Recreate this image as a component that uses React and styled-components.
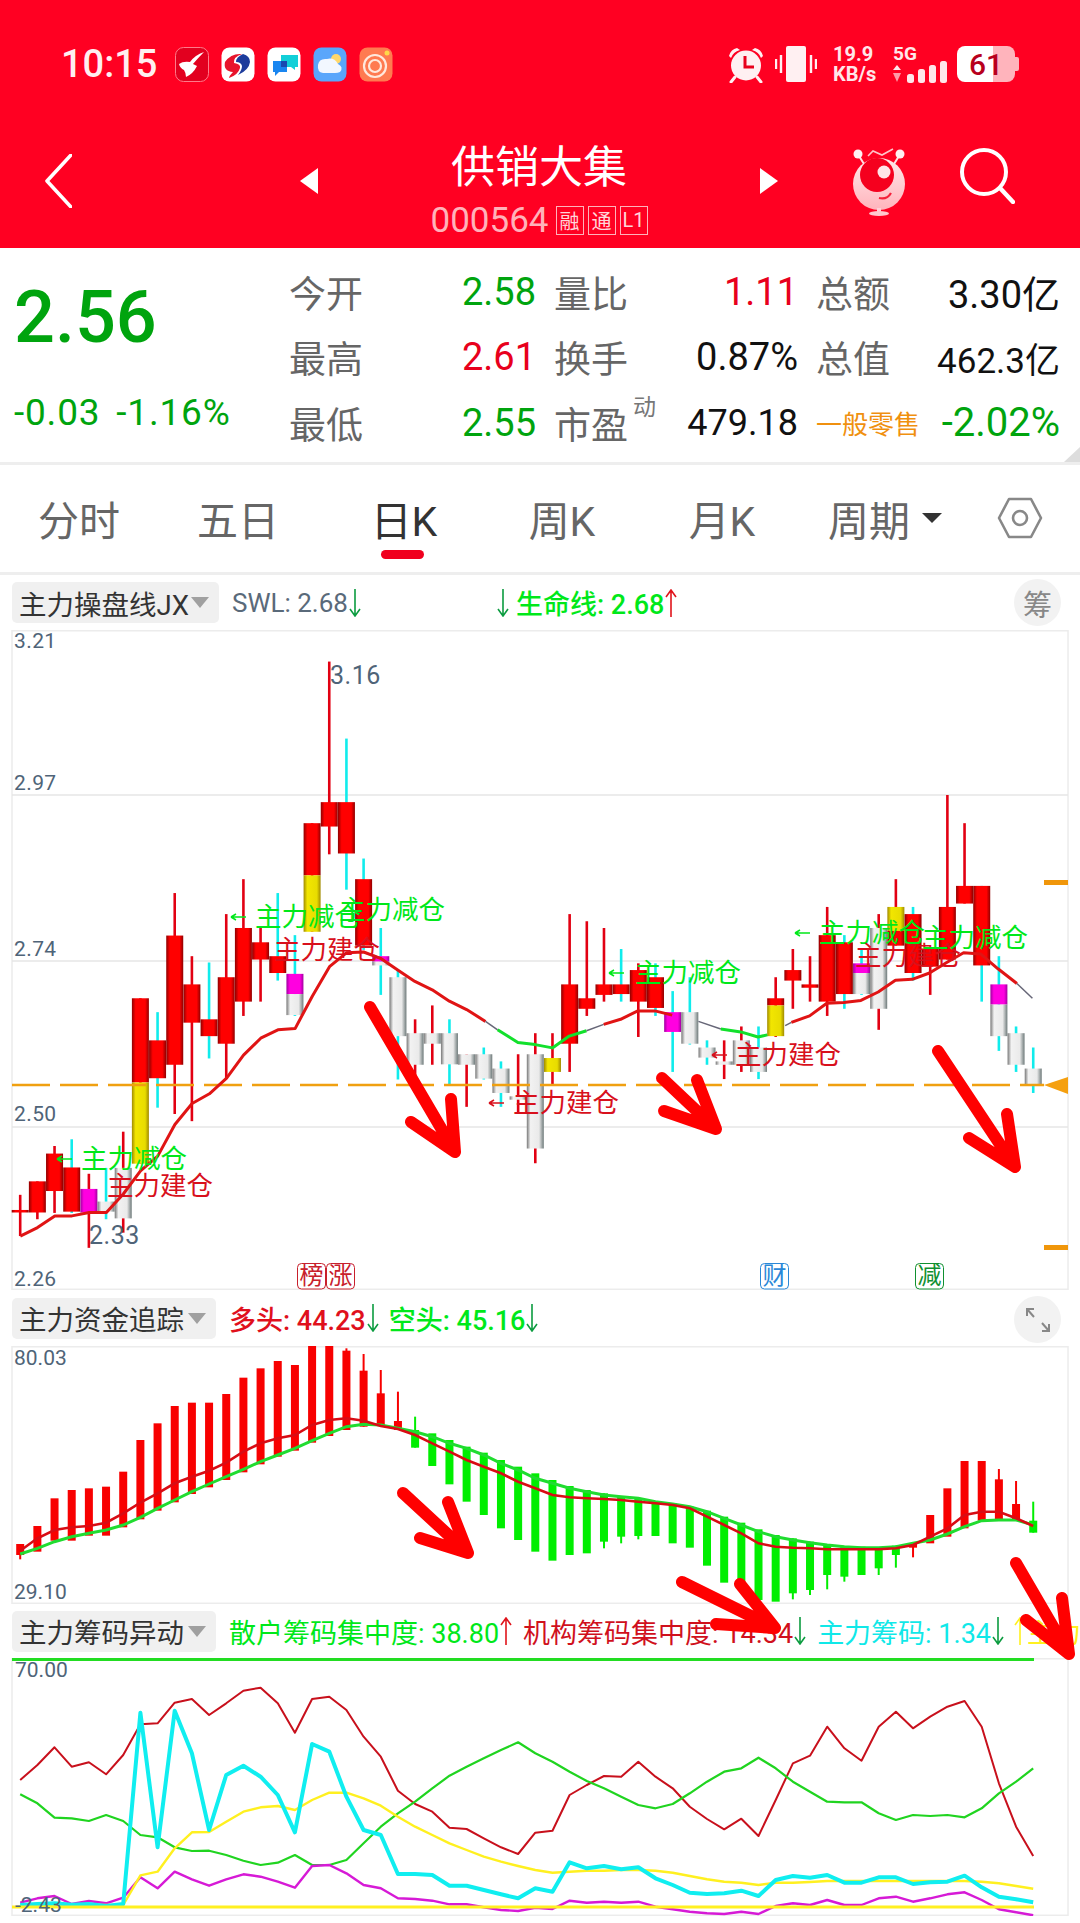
import React from 'react';
import styled, { createGlobalStyle } from 'styled-components';

const FONT = `Roboto, "Noto Sans CJK SC", sans-serif`;
const GREEN = '#00a40e';
const RED = '#e8001c';
const NEON = '#00e81a';

const GlobalStyle = createGlobalStyle`
  html, body { margin: 0; padding: 0; background: #fff; }
  body { font-family: ${FONT}; }
`;

const Page = styled.div`
  position: relative;
  width: 1080px;
  height: 1923px;
  overflow: hidden;
  background: #fff;
`;

/* header */
const TopBar = styled.header`
  height: 248px;
  background: #ff0022;
  color: #fff;
`;

const StatusRow = styled.div`
  display: flex;
  justify-content: space-between;
  align-items: center;
  height: 36px;
  padding: 46px 61px 0;
`;

const StatusGroup = styled.div`
  display: flex;
  align-items: center;
  gap: ${(p) => p.$gap || 0}px;
`;

const Time = styled.span`
  width: 98px;
  margin-right: 4px;
  font-size: 38px;
  font-weight: 500;
  color: #ffeef0;
  white-space: nowrap;
`;

const Speed = styled.div`
  display: flex;
  flex-direction: column;
  align-items: flex-start;
  width: 44px;
  margin: 0 16px;
  font-size: 20px;
  font-weight: 700;
  line-height: 20px;
  color: #ffe6ea;
  white-space: nowrap;
`;

const NetBlock = styled.div`
  display: flex;
  flex-direction: column;
  width: 54px;
  margin-right: 10px;
  font-size: 19px;
  font-weight: 700;
  line-height: 15px;
  color: #ffe6ea;
`;

const Battery = styled.div`
  display: flex;
  align-items: center;
  justify-content: center;
  width: 58px;
  height: 36px;
  border-radius: 8px;
  background: linear-gradient(90deg, #fff 0, #fff 62%, #ffb4bc 62%, #ffb4bc 100%);
  font-size: 30px;
  font-weight: 500;
  color: #b8001c;
`;

const BatteryTip = styled.div`
  width: 4px;
  height: 14px;
  border-radius: 0 2px 2px 0;
  background: #ffb4bc;
`;

const NavRow = styled.div`
  display: flex;
  align-items: flex-start;
  padding-left: 45px;
  height: 166px;
`;

const BackWrap = styled.div`
  width: 255px;
  padding-top: 72px;
`;

const StockSwitch = styled.div`
  display: flex;
  justify-content: space-between;
  width: 478px;
  padding-top: 64px;
`;

const SwitchArrow = styled.span`
  margin-top: 22px;
  width: 0;
  height: 0;
  border-top: 13px solid transparent;
  border-bottom: 13px solid transparent;
  border-${(p) => (p.$right ? 'left' : 'right')}: 18px solid #fff;
`;

const StockName = styled.div`
  display: flex;
  flex-direction: column;
  align-items: center;
`;

const Title = styled.div`
  font-size: 44px;
  line-height: 44px;
  color: #fff;
  white-space: nowrap;
`;

const CodeRow = styled.div`
  display: flex;
  align-items: center;
  gap: 4px;
  margin-top: 16px;
  height: 28px;
`;

const Code = styled.span`
  margin-right: 3px;
  font-size: 35px;
  color: #ffb2ba;
`;

const CodeBadge = styled.span`
  display: flex;
  align-items: center;
  justify-content: center;
  width: 26px;
  height: 27px;
  border: 1px solid #ffb2ba;
  font-size: 20px;
  color: #ffd6da;
`;

const NavIcons = styled.div`
  display: flex;
  gap: 53px;
  margin-left: 74px;
  padding-top: 66px;
`;

/* quote */
const Quote = styled.section`
  position: relative;
  display: flex;
  height: 214px;
  border-bottom: 3px solid #eee;
  box-sizing: content-box;
`;

const PriceColumn = styled.div`
  display: flex;
  flex-direction: column;
  width: 289px;
  padding: 35px 0 0 14px;
  box-sizing: border-box;
`;

const Price = styled.div`
  font-size: 72px;
  font-weight: 500;
  line-height: 70px;
  color: ${GREEN};
`;

const Change = styled.div`
  margin-top: 40px;
  font-size: 37px;
  line-height: 40px;
  letter-spacing: 0.8px;
  word-spacing: 6px;
  color: ${GREEN};
  white-space: pre;
`;

const QuoteGrid = styled.div`
  display: grid;
  grid-template-columns: 247px 244px 244px;
  grid-auto-rows: 65.5px;
  column-gap: 18px;
  padding-top: 11px;
`;

const QuoteCell = styled.div`
  display: flex;
  justify-content: space-between;
  align-items: center;
  white-space: nowrap;
`;

const QuoteLabel = styled.span`
  position: relative;
  font-size: 37px;
  color: ${(p) => p.$color || '#666'};
`;

const SmallTag = styled.span`
  font-size: 26px;
  color: #f0900f;
`;

const Superscript = styled.sup`
  position: absolute;
  left: 79px;
  top: -3px;
  font-size: 23px;
  line-height: 30px;
  color: #777;
`;

const QuoteValue = styled.span`
  font-size: ${(p) => p.$size || 38}px;
  color: ${(p) => p.$color};
`;

const CornerMark = styled.span`
  position: absolute;
  right: 0;
  bottom: 0;
  width: 0;
  height: 0;
  border-bottom: 15px solid #ddd;
  border-left: 16px solid transparent;
`;

/* tabs */
const Tabs = styled.nav`
  display: grid;
  grid-template-columns: 158px 160px 172px 144px 176px 150px 120px;
  align-items: center;
  height: 107px;
`;

const Tab = styled.div`
  position: relative;
  display: flex;
  align-items: center;
  justify-content: center;
  gap: 12px;
  margin-bottom: 2px;
  font-size: 41px;
  color: ${(p) => (p.$active ? '#333' : '#666')};

  ${(p) =>
    p.$active &&
    `&::after {
      content: '';
      position: absolute;
      left: 63px;
      top: 62px;
      width: 43px;
      height: 9px;
      border-radius: 5px;
      background: #f0001e;
    }`}
`;

const Caret = styled.span`
  width: 0;
  height: 0;
  border-left: 10px solid transparent;
  border-right: 10px solid transparent;
  border-top: 10px solid #333;
`;

/* indicator rows */
const IndicatorBar = styled.div`
  display: flex;
  align-items: center;
  height: ${(p) => p.$height}px;
  padding-left: 12px;
  border-top: ${(p) => (p.$ruled ? '3px solid #eee' : 'none')};
  box-sizing: border-box;
  overflow: hidden;
  white-space: nowrap;
`;

const Chip = styled.div`
  display: flex;
  flex: none;
  align-items: center;
  justify-content: space-between;
  width: ${(p) => p.$width}px;
  height: 41px;
  padding: 0 10px 0 7px;
  margin-right: 13px;
  box-sizing: border-box;
  border-radius: 5px;
  background: #f0f0f0;
  font-size: 27.5px;
  color: #333;
`;

const ChipCaret = styled.span`
  width: 0;
  height: 0;
  border-left: 9px solid transparent;
  border-right: 9px solid transparent;
  border-top: 11px solid #a0a0a0;
`;

const Legend = styled.span`
  display: inline-flex;
  flex: none;
  align-items: center;
  margin-right: ${(p) => p.$gap || 0}px;
  font-size: ${(p) => p.$size || 27}px;
  font-weight: ${(p) => p.$weight || 400};
  color: ${(p) => p.$color};
`;

const RoundButton = styled.div`
  position: absolute;
  left: 1014px;
  top: ${(p) => p.$top}px;
  display: flex;
  align-items: center;
  justify-content: center;
  width: 47px;
  height: 47px;
  border-radius: 50%;
  background: #f2f2f2;
  font-size: 29px;
  color: #888;
`;

const ChartCanvas = styled.svg`
  display: block;
  width: 1080px;
  height: ${(p) => p.$height}px;
`;

const ArrowLayer = styled.svg`
  position: absolute;
  left: 0;
  top: 0;
  width: 1080px;
  height: 1923px;
  pointer-events: none;
`;

const AxisText = styled.text`
  font-family: Roboto, sans-serif;
  font-size: ${(p) => p.$size || 21}px;
  letter-spacing: ${(p) => p.$spacing || 0}px;
  fill: #4f6478;
`;

const SignalText = styled.text`
  font-family: ${FONT};
  font-size: 26.5px;
  fill: ${(p) => p.$color};
`;

const TagText = styled.text`
  font-family: ${FONT};
  font-size: 24px;
  text-anchor: middle;
  fill: ${(p) => p.$color};
`;

/* status bar + nav drawings */
const AppIcon = ({ children, bg }) => (
  <svg width="34" height="35" viewBox="0 0 34 35">
    <rect x="0.5" y="0.5" width="33" height="34" rx="8" fill={bg} stroke={bg === '#e2001f' ? '#ff7a8a' : 'none'} />
    {children}
  </svg>
);

const Alarm = () => (
  <svg width="38" height="37" viewBox="0 0 38 37" style={{ marginRight: 10 }}>
    <circle cx="19" cy="19.5" r="15" fill="#fff0f2" />
    <path d="M2 10 Q4 3 10 2 L13 4 Q6 6 4 12Z M36 10 Q34 3 28 2 L25 4 Q32 6 34 12Z" fill="#fff0f2" />
    <path d="M8 31 L4 36 M30 31 L34 36" stroke="#fff0f2" strokeWidth="3" strokeLinecap="round" />
    <path d="M18 10 V21 H27" stroke="#e8001c" strokeWidth="3" fill="none" />
  </svg>
);

const Vibrate = () => (
  <svg width="42" height="36" viewBox="0 0 42 36">
    <rect x="11" y="0" width="20" height="36" rx="2" fill="#fff0f2" />
    <path d="M6 9 V27 M1 13 V23 M36 9 V27 M41 13 V23" stroke="#fff0f2" strokeWidth="2.4" />
  </svg>
);

const Signal = () => (
  <svg width="54" height="22" viewBox="0 0 54 22">
    <path d="M4 4 L8 9 H0Z" fill="#ffe6ea" />
    <path d="M4 21 L8 12 H0Z" fill="#ff9aa8" />
    <rect x="14" y="13" width="7" height="9" rx="2.5" fill="#ffe6ea" />
    <rect x="25" y="8" width="7" height="14" rx="2.5" fill="#ffe6ea" />
    <rect x="36" y="4" width="7" height="18" rx="2.5" fill="#ffe6ea" />
    <rect x="47" y="0" width="7" height="22" rx="2.5" fill="#ffe6ea" />
  </svg>
);

const Mascot = () => (
  <svg width="54" height="68" viewBox="0 0 54 68">
    <defs>
      <linearGradient id="mascotFace" x1="0" y1="0" x2="0" y2="1">
        <stop offset="0" stopColor="#ffe8ea" />
        <stop offset="1" stopColor="#ffb4bc" />
      </linearGradient>
    </defs>
    <path d="M16 8 L21 3 L30 7 L41 1" stroke="#ffc4ca" strokeWidth="1.6" fill="none" />
    <path d="M7 8 L12 16 M47 8 L42 16" stroke="#ffdfe3" strokeWidth="2" />
    <circle cx="6" cy="6" r="4.5" fill="#fff0f2" />
    <circle cx="48" cy="6" r="4.5" fill="#fff0f2" />
    <circle cx="27" cy="36" r="26" fill="url(#mascotFace)" />
    <circle cx="25" cy="27" r="17" fill="#f5001e" />
    <circle cx="32" cy="24" r="6.5" fill="#ffe4e8" />
    <path d="M27 50 Q35 52 39 45" stroke="#f5203a" strokeWidth="2.2" fill="none" />
    <rect x="25" y="60" width="4" height="4" fill="#ffd0d6" />
    <ellipse cx="27" cy="65.5" rx="10" ry="2.5" fill="#ffc8ce" />
  </svg>
);

/* candle chart */
const slot = (i) => 20.2 + 17.17 * i;
const candleY = (v) => v / 2.376;

// wick top, wick bottom, wick colour (r red / c cyan), body segments [kind, top, bottom]
const CANDLES = [
  [1342, 1440, 'r', [['r', 1378, 1384]]],
  [1310, 1400, 'r', [['r', 1310, 1384]]],
  [1226, 1385, 'r', [['r', 1244, 1333]]],
  [1210, 1385, 'c', [['r', 1277, 1382]]],
  [1292, 1468, 'r', [['m', 1328, 1384]]],
  [1278, 1400, 'c', [['w', 1358, 1382]]],
  [1192, 1432, 'r', [['w', 1278, 1398]]],
  [875, 1268, 'r', [['r', 875, 1075], ['y', 1075, 1268]]],
  [908, 1135, 'c', [['r', 975, 1065]]],
  [625, 1150, 'r', [['r', 726, 1033]]],
  [775, 1167, 'r', [['r', 842, 933]]],
  [790, 1018, 'c', [['r', 925, 965]]],
  [675, 1065, 'r', [['r', 825, 983]]],
  [592, 917, 'r', [['r', 708, 883]]],
  [708, 883, 'r', [['r', 742, 783]]],
  [625, 833, 'c', [['r', 775, 815]]],
  [725, 917, 'c', [['m', 817, 865], ['w', 865, 915]]],
  [459, 717, 'r', [['r', 459, 583], ['y', 583, 717]]],
  [75, 533, 'r', [['r', 409, 467]]],
  [258, 617, 'c', [['r', 409, 531]]],
  [543, 760, 'c', [['r', 592, 750]]],
  [708, 867, 'c', [['m', 775, 788], ['w', 788, 797]]],
  [808, 1068, 'c', [['w', 825, 965]]],
  [925, 1068, 'r', [['w', 958, 1033]]],
  [892, 1033, 'r', [['w', 958, 983]]],
  [925, 1083, 'c', [['w', 958, 1032]]],
  [1008, 1133, 'r', [['w', 1008, 1033]]],
  [992, 1068, 'c', [['w', 1008, 1066]]],
  [1025, 1133, 'c', [['w', 1042, 1100]]],
  [1008, 1150, 'r', [['w', 1108, 1116]]],
  [958, 1267, 'r', [['w', 1008, 1232]]],
  [958, 1083, 'r', [['y', 1017, 1050]]],
  [675, 1050, 'r', [['r', 842, 983]]],
  [692, 917, 'r', [['r', 875, 900]]],
  [708, 883, 'r', [['r', 842, 867]]],
  [758, 883, 'c', [['r', 842, 865]]],
  [792, 967, 'r', [['r', 808, 883]]],
  [792, 917, 'c', [['r', 825, 898]]],
  [858, 1050, 'c', [['m', 908, 955]]],
  [825, 985, 'c', [['w', 908, 983]]],
  [975, 1033, 'c', [['w', 992, 1016]]],
  [975, 1067, 'r', [['w', 1025, 1033]]],
  [942, 1050, 'r', [['w', 975, 1033]]],
  [942, 1067, 'c', [['w', 992, 1050]]],
  [825, 967, 'r', [['r', 875, 892], ['y', 892, 965]]],
  [758, 900, 'r', [['r', 808, 833]]],
  [775, 883, 'r', [['r', 842, 850]]],
  [658, 917, 'r', [['r', 725, 883]]],
  [725, 900, 'c', [['r', 742, 865]]],
  [758, 867, 'c', [['m', 792, 815], ['w', 815, 865]]],
  [675, 950, 'r', [['w', 708, 900]]],
  [592, 750, 'r', [['y', 658, 715], ['r', 715, 750]]],
  [658, 833, 'c', [['r', 675, 815]]],
  [758, 867, 'r', [['r', 758, 800]]],
  [392, 783, 'r', [['r', 658, 783]]],
  [459, 650, 'r', [['r', 608, 650]]],
  [608, 883, 'c', [['r', 608, 797]]],
  [775, 1000, 'c', [['m', 842, 890], ['w', 890, 965]]],
  [942, 1050, 'c', [['w', 958, 1033]]],
  [992, 1100, 'c', [['w', 1042, 1080]]],
];

const BODY_FILL = { r: 'url(#bodyRed)', w: 'url(#bodyWhite)', y: 'url(#bodyYellow)', m: 'url(#bodyMagenta)' };

// trend line pieces in full-size x, zoomed y
const leftX = (v) => v / 2.904;
const rightX = (v) => 540 + v / 2.904;
const toPoints = (pts) => pts.map(([x, y]) => `${x.toFixed(1)},${candleY(y).toFixed(1)}`).join(' ');
const fromLeft = (pts) => pts.map(([x, y]) => [leftX(x), y]);
const fromRight = (pts) => pts.map(([x, y]) => [rightX(x), y]);

const TREND = [
  ['#e01414', 3, fromLeft([[59, 1440], [109, 1420], [159, 1392], [209, 1392], [259, 1384], [309, 1384], [358, 1340], [408, 1285], [458, 1250], [508, 1175], [558, 1125], [608, 1102], [658, 1065], [707, 1010], [757, 970], [807, 950], [857, 947], [907, 870], [957, 800], [1006, 767], [1056, 765], [1105, 780], [1155, 808], [1205, 835], [1255, 855], [1305, 882], [1355, 902], [1410, 930]])],
  ['#667', 1.5, fromLeft([[1410, 930], [1445, 950]])],
  ['#12e02c', 3, [...fromLeft([[1445, 950], [1504, 980], [1554, 985]]), ...fromRight([[36, 993], [85, 965], [135, 952]])]],
  ['#667', 1.5, fromRight([[135, 952], [185, 937]])],
  ['#e01414', 3, fromRight([[185, 937], [234, 925], [284, 905], [334, 905], [384, 915]])],
  ['#667', 1.5, fromRight([[460, 930], [525, 948]])],
  ['#12e02c', 3, fromRight([[525, 948], [583, 955], [633, 967], [660, 962]])],
  ['#667', 1.5, fromRight([[712, 940], [730, 932]])],
  ['#e01414', 3, fromRight([[730, 932], [783, 917], [833, 887], [882, 885], [932, 880], [982, 860], [1032, 832], [1081, 830], [1131, 815], [1181, 790], [1230, 767], [1280, 770], [1330, 805], [1385, 840]])],
  ['#667', 1.5, fromRight([[1385, 840], [1430, 875]])],
];

const SIGNALS = [
  { text: '主力减仓', x: 81, y: 538, color: NEON, arrow: 57 },
  { text: '主力建仓', x: 107, y: 565, color: '#d8101c' },
  { text: '主力减仓', x: 255, y: 296, color: NEON, arrow: 231 },
  { text: '主力减仓', x: 339, y: 289, color: NEON },
  { text: '主力建仓', x: 274, y: 329, color: '#d8101c' },
  { text: '主力建仓', x: 513, y: 482, color: '#d8101c', arrow: 489 },
  { text: '主力减仓', x: 635, y: 352, color: NEON, arrow: 609 },
  { text: '主力建仓', x: 735, y: 434, color: '#d8101c', arrow: 712 },
  { text: '主力减仓', x: 819, y: 312, color: NEON, arrow: 795 },
  { text: '主力建仓', x: 855, y: 335, color: '#d8101c' },
  { text: '主力减仓', x: 922, y: 317, color: NEON },
];

const FrameLines = ({ height, rows = [] }) => (
  <g stroke="#e6e6e6" fill="none" strokeWidth="1.5">
    <rect x="12" y="0.75" width="1056" height={height - 1.5} stroke="#ececec" />
    {rows.map((y) => (
      <line key={y} x1="12" x2="1068" y1={y} y2={y} />
    ))}
  </g>
);

const BodyGradient = ({ id, stops }) => (
  <linearGradient id={id} x1="0" x2="1" y1="0" y2="0">
    {stops.map(([offset, color]) => (
      <stop key={offset} offset={offset} stopColor={color} />
    ))}
  </linearGradient>
);

const CandleChart = () => (
  <ChartCanvas $height={660} viewBox="0 0 1080 660">
    <defs>
      <BodyGradient id="bodyRed" stops={[[0, '#8f0000'], [0.22, '#ff0000'], [0.78, '#ff0000'], [1, '#8f0000']]} />
      <BodyGradient id="bodyWhite" stops={[[0, '#777'], [0.22, '#f2f2f2'], [0.72, '#eaeaea'], [1, '#6e7a7a']]} />
      <BodyGradient id="bodyYellow" stops={[[0, '#a08a00'], [0.22, '#f2e600'], [0.78, '#e8dc00'], [1, '#a08a00']]} />
      <BodyGradient id="bodyMagenta" stops={[[0, '#a000a0'], [0.2, '#ff00e0'], [0.8, '#ff00e0'], [1, '#a000a0']]} />
    </defs>
    <FrameLines height={660} rows={[165, 331, 497]} />
    {CANDLES.map(([top, bottom, wick, segments], i) => (
      <g key={i}>
        <line x1={slot(i)} x2={slot(i)} y1={candleY(top)} y2={candleY(bottom)} stroke={wick === 'r' ? '#e20012' : '#10ecec'} strokeWidth="2.6" />
        {segments.map(([kind, t, b]) => (
          <rect key={t} x={slot(i) - 8.5} width="17" y={candleY(t)} height={candleY(b) - candleY(t)} fill={BODY_FILL[kind]} />
        ))}
      </g>
    ))}
    <line x1="12" x2="1044" y1="455" y2="455" stroke="#f0a010" strokeWidth="2.5" strokeDasharray="38 10" />
    {TREND.map(([color, width, pts], i) => (
      <polyline key={i} points={toPoints(pts)} fill="none" stroke={color} strokeWidth={width} strokeLinejoin="round" />
    ))}
    {SIGNALS.map((s) => (
      <g key={`${s.x}-${s.y}`}>
        {s.arrow && (
          <path d={`M${s.arrow} ${s.y - 9}h15 M${s.arrow} ${s.y - 9}l5 -3 M${s.arrow} ${s.y - 9}l5 3`} stroke={s.color} strokeWidth="1.5" fill="none" />
        )}
        <SignalText x={s.x} y={s.y} $color={s.color}>{s.text}</SignalText>
      </g>
    ))}
    <AxisText x="14" y="18" $spacing={0.4}>3.21</AxisText>
    <AxisText x="14" y="160" $spacing={0.4}>2.97</AxisText>
    <AxisText x="14" y="326" $spacing={0.4}>2.74</AxisText>
    <AxisText x="14" y="491" $spacing={0.4}>2.50</AxisText>
    <AxisText x="14" y="656" $spacing={0.4}>2.26</AxisText>
    <AxisText x="330" y="54" $size={25} $spacing={0.5}>3.16</AxisText>
    <AxisText x="89" y="614" $size={25} $spacing={0.5}>2.33</AxisText>
    <rect x="1044" y="250" width="24" height="5" fill="#f0960a" />
    <rect x="1044" y="615" width="24" height="5" fill="#f0960a" />
    <path d="M1044 455 L1068 447 V464Z" fill="#f5a010" />
    {[[297, '榜', '#c8202c'], [326, '涨', '#c8202c'], [760, '财', '#2a88d8'], [915, '减', '#109030']].map(([x, t, c]) => (
      <g key={t}>
        <rect x={x + 0.5} y="633.5" width="28" height="25.5" rx="4" fill="#fff" stroke={c} />
        <TagText x={x + 14.5} y="654" $color={c}>{t}</TagText>
      </g>
    ))}
  </ChartCanvas>
);

/* money flow bars */
const BARS = [
  ['r', 792, 825, 838], ['r', 738, 815], ['r', 655, 782], ['r', 630, 782], ['r', 625, 767], ['r', 620, 767],
  ['r', 575, 742], ['r', 480, 718], ['r', 430, 692], ['r', 378, 667], ['r', 368, 642], ['r', 368, 622],
  ['r', 342, 600], ['r', 293, 577], ['r', 265, 553], ['r', 243, 530], ['r', 255, 512], ['r', 198, 488],
  ['r', 198, 468], ['r', 212, 450, 450, 205], ['r', 272, 440, 440, 222], ['r', 340, 437, 437, 270], ['r', 423, 450, 450, 335],
  ['g', 450, 503, 503, 410], ['g', 460, 558], ['g', 480, 613], ['g', 500, 665], ['g', 518, 705], ['g', 540, 745],
  ['g', 560, 780], ['g', 580, 815], ['g', 600, 842], ['g', 618, 825], ['g', 630, 820], ['g', 640, 785, 805],
  ['g', 648, 770, 790], ['g', 655, 768, 778], ['g', 663, 768], ['g', 670, 790], ['g', 680, 803], ['g', 692, 857],
  ['g', 710, 908], ['g', 728, 930], ['g', 748, 960], ['g', 765, 965], ['g', 775, 940, 958], ['g', 785, 930, 945],
  ['g', 795, 885, 928], ['g', 800, 890, 905], ['g', 800, 885], ['g', 803, 865, 885], ['g', 797, 825, 863],
  ['r', 790, 803, 832], ['r', 705, 790], ['r', 625, 770], ['r', 543, 745], ['r', 543, 722],
  ['r', 598, 720, 720, 567], ['r', 672, 720, 720, 603], ['g', 722, 758, 758, 665],
];

const FLOW_LOWER = [822, 805, 785, 770, 760, 750, 735, 712, 685, 660, 635, 612, 590, 568, 545, 525, 505, 482, 460, 440, 433, 435, 445, 455, 470, 490, 505, 525, 550, 570, 595, 610, 625, 635, 645, 650, 655, 665, 672, 680, 695, 715, 735, 755, 770, 780, 788, 795, 800, 803, 803, 800, 790, 780, 762, 740, 722, 720, 720, 735];
const FLOW_UPPER = [812, 775, 750, 742, 738, 728, 700, 668, 640, 610, 590, 572, 548, 515, 490, 475, 465, 435, 420, 415, 422, 438, 447, 465, 490, 515, 540, 560, 580, 605, 625, 645, 652, 655, 657, 660, 665, 670, 675, 685, 710, 735, 760, 790, 800, 803, 805, 808, 808, 808, 808, 805, 795, 770, 745, 705, 695, 695, 715, 738];

const flowY = (v) => v / 3 - 66;
const flowPoints = (list) => list.map((v, i) => `${slot(i).toFixed(1)},${flowY(v).toFixed(1)}`).join(' ');

const FlowChart = () => (
  <ChartCanvas $height={258} viewBox="0 0 1080 258">
    <FrameLines height={258} />
    {BARS.map(([tone, top, bottom, wickBottom, wickTop], i) => {
      const fill = tone === 'r' ? '#f80000' : '#00ee00';
      return (
        <g key={i}>
          {(wickBottom || wickTop) && (
            <line x1={slot(i)} x2={slot(i)} y1={flowY(wickTop || top)} y2={flowY(wickBottom || bottom)} stroke={fill} strokeWidth="2" />
          )}
          <rect x={slot(i) - 4} width="8" y={flowY(top)} height={flowY(bottom) - flowY(top)} fill={fill} />
        </g>
      );
    })}
    <polyline points={flowPoints(FLOW_LOWER)} fill="none" stroke="#20dc30" strokeWidth="3" />
    <polyline points={flowPoints(FLOW_UPPER)} fill="none" stroke="#d80c14" strokeWidth="2.6" />
    <AxisText x="14" y="19">80.03</AxisText>
    <AxisText x="14" y="253">29.10</AxisText>
  </ChartCanvas>
);

/* chip distribution lines */
const CHIP_RED = [540, 495, 442, 500, 487, 523, 465, 373, 370, 308, 297, 345, 310, 272, 263, 310, 398, 297, 290, 330, 410, 470, 572, 612, 635, 683, 687, 715, 742, 762, 698, 692, 585, 555, 528, 530, 485, 530, 565, 620, 657, 688, 656, 708, 600, 490, 467, 380, 445, 482, 380, 335, 385, 350, 320, 303, 380, 550, 680, 768];
const CHIP_GREEN = [583, 610, 653, 655, 663, 645, 663, 705, 712, 742, 753, 752, 765, 782, 795, 788, 765, 795, 795, 780, 730, 680, 640, 605, 565, 527, 500, 475, 450, 427, 460, 485, 515, 543, 565, 590, 615, 625, 612, 580, 545, 515, 505, 473, 505, 545, 575, 605, 607, 607, 640, 660, 645, 648, 645, 652, 625, 580, 545, 505];
const CHIP_CYAN = [915, 912, 910, 914, 912, 918, 912, 338, 742, 332, 460, 690, 525, 497, 530, 585, 697, 432, 455, 590, 690, 705, 822, 822, 825, 857, 857, 870, 883, 895, 865, 875, 787, 805, 798, 808, 802, 835, 855, 878, 882, 880, 872, 888, 840, 828, 833, 825, 848, 848, 832, 832, 852, 847, 845, 827, 862, 890, 898, 907];
const CHIP_YELLOW = [915, 915, 915, 915, 915, 915, 915, 826, 815, 745, 697, 696, 665, 635, 622, 618, 630, 600, 578, 578, 595, 617, 650, 680, 705, 730, 750, 770, 785, 798, 810, 818, 815, 812, 812, 810, 810, 812, 818, 828, 838, 845, 848, 855, 848, 848, 846, 843, 843, 843, 843, 843, 843, 843, 843, 843, 845, 850, 858, 866];
const CHIP_MAGENTA = [908, 895, 888, 912, 903, 910, 893, 832, 865, 815, 838, 857, 838, 823, 830, 845, 863, 798, 795, 820, 855, 865, 895, 897, 902, 913, 913, 922, 930, 933, 923, 927, 902, 908, 905, 908, 905, 920, 928, 935, 940, 942, 935, 942, 918, 910, 915, 900, 915, 915, 895, 890, 905, 895, 883, 877, 900, 928, 937, 946];

const chipPoints = (list) => list.map((v, i) => `${slot(i).toFixed(1)},${(v / 3 - 58).toFixed(1)}`).join(' ');

const CHIP_LINES = [
  [CHIP_RED, '#c8101c', 2],
  [CHIP_GREEN, '#20d420', 2.2],
  [CHIP_MAGENTA, '#d61ad6', 2.4],
  [CHIP_YELLOW, '#fff020', 2.4],
  [CHIP_CYAN, '#10eef0', 4],
];

const ChipChart = () => (
  <ChartCanvas $height={258} viewBox="0 0 1080 258">
    <FrameLines height={258} />
    <line x1="12" x2="1034" y1="1.5" y2="1.5" stroke="#22dd22" strokeWidth="3" />
    {CHIP_LINES.map(([list, color, width]) => (
      <polyline key={color} points={chipPoints(list)} fill="none" stroke={color} strokeWidth={width} strokeLinejoin="round" />
    ))}
    <line x1="12" x2="1034" y1="249" y2="249" stroke="#fff020" strokeWidth="3" />
    <AxisText x="15" y="19">70.00</AxisText>
    <AxisText x="15" y="254">-2.43</AxisText>
  </ChartCanvas>
);

const TrendMark = ({ up, color, gap = 1 }) => (
  <svg width="12" height="28" viewBox="0 0 12 28" style={{ margin: `0 ${gap}px` }}>
    <path d={up ? 'M6 28 V1 M1 8 L6 1 L11 8' : 'M6 0 V27 M1 20 L6 27 L11 20'} stroke={color} strokeWidth="1.6" fill="none" />
  </svg>
);

const HandArrow = ({ from, tip, wings }) => (
  <path
    d={`M${from} L${tip} M${wings[0]} L${tip} L${wings[1]}`}
    fill="none"
    stroke="#ff0000"
    strokeWidth="12"
    strokeLinecap="round"
    strokeLinejoin="round"
  />
);

const QUOTE = [
  ['今开', '2.58', GREEN],
  ['量比', '1.11', RED],
  ['总额', '3.30亿', '#111'],
  ['最高', '2.61', RED],
  ['换手', '0.87%', '#111'],
  ['总值', '462.3亿', '#111', 35],
];

const App = () => (
  <Page>
    <GlobalStyle />
    <TopBar>
      <StatusRow>
        <StatusGroup $gap={12}>
          <Time>10:15</Time>
          <AppIcon bg="#e2001f">
            <path d="M29 5 Q20 8 15 15 Q8 14 4 17 Q5 21 9 23 Q11 26 11 30 Q18 27 22 19 L18 17 Q23 11 29 5Z" fill="#fff" />
          </AppIcon>
          <AppIcon bg="#fff">
            <path d="M22 7 Q29 9 29 15 Q28 23 17 28 Q21 23 21 19 Q20 15 15 15 Q15 10 22 7Z" fill="#1d3c9c" />
            <path d="M21 7 Q10 6 4 15 Q2 24 12 25 Q8 29 8 31 Q17 28 19 21 Q20 17 13 16 Q12 10 21 7Z" fill="#e8142c" />
          </AppIcon>
          <AppIcon bg="#fff">
            <path d="M14 8 H31 V20 H28 V23 L24 20 H14Z" fill="#12cfd8" />
            <path d="M6 14 H20 V25 H12 L8 29 V25 H6Z" fill="#1a86f0" />
            <rect x="14" y="14" width="6" height="6" fill="#1a4ab0" />
          </AppIcon>
          <AppIcon bg="#5aa6fb">
            <circle cx="23" cy="12" r="5" fill="#ffd76a" />
            <path d="M10 26 Q4 25 5 18 Q6 11 14 12 Q21 10 25 17 Q31 20 27 25 Q25 26 22 26Z" fill="#f2f7ff" />
          </AppIcon>
          <AppIcon bg="#ff7a50">
            <circle cx="16" cy="19" r="11" fill="none" stroke="#ffe8dc" strokeWidth="2.2" />
            <circle cx="16" cy="19" r="6" fill="none" stroke="#ffe8dc" strokeWidth="2.2" />
            <circle cx="28" cy="6" r="2.5" fill="#ffd84a" />
          </AppIcon>
        </StatusGroup>
        <StatusGroup>
          <Alarm />
          <Vibrate />
          <Speed>
            <span>19.9</span>
            <span>KB/s</span>
          </Speed>
          <NetBlock>
            <span>5G</span>
            <Signal />
          </NetBlock>
          <Battery>61</Battery>
          <BatteryTip />
        </StatusGroup>
      </StatusRow>
      <NavRow>
        <BackWrap>
          <svg width="27" height="54" viewBox="0 0 27 54">
            <path d="M26 1 L2 27 L26 53" fill="none" stroke="#fff" strokeWidth="3.6" strokeLinecap="round" strokeLinejoin="round" />
          </svg>
        </BackWrap>
        <StockSwitch>
          <SwitchArrow />
          <StockName>
            <Title>供销大集</Title>
            <CodeRow>
              <Code>000564</Code>
              <CodeBadge>融</CodeBadge>
              <CodeBadge>通</CodeBadge>
              <CodeBadge>L1</CodeBadge>
            </CodeRow>
          </StockName>
          <SwitchArrow $right />
        </StockSwitch>
        <NavIcons>
          <Mascot />
          <svg width="56" height="56" viewBox="0 0 56 56">
            <circle cx="25" cy="24" r="22" fill="none" stroke="#fff" strokeWidth="4" />
            <path d="M41 40 L54 54" stroke="#fff" strokeWidth="4.4" strokeLinecap="round" />
          </svg>
        </NavIcons>
      </NavRow>
    </TopBar>

    <Quote>
      <PriceColumn>
        <Price>2.56</Price>
        <Change>-0.03 -1.16%</Change>
      </PriceColumn>
      <QuoteGrid>
        {QUOTE.map(([label, value, color, size]) => (
          <QuoteCell key={label}>
            <QuoteLabel>{label}</QuoteLabel>
            <QuoteValue $color={color} $size={size}>{value}</QuoteValue>
          </QuoteCell>
        ))}
        <QuoteCell>
          <QuoteLabel>最低</QuoteLabel>
          <QuoteValue $color={GREEN}>2.55</QuoteValue>
        </QuoteCell>
        <QuoteCell>
          <QuoteLabel>
            市盈
            <Superscript>动</Superscript>
          </QuoteLabel>
          <QuoteValue $color="#111" $size={36}>479.18</QuoteValue>
        </QuoteCell>
        <QuoteCell>
          <SmallTag>一般零售</SmallTag>
          <QuoteValue $color={GREEN} $size={40}>-2.02%</QuoteValue>
        </QuoteCell>
      </QuoteGrid>
      <CornerMark />
    </Quote>

    <Tabs>
      <Tab>分时</Tab>
      <Tab>五日</Tab>
      <Tab $active>日K</Tab>
      <Tab>周K</Tab>
      <Tab>月K</Tab>
      <Tab>
        周期
        <Caret />
      </Tab>
      <Tab>
        <svg width="46" height="42" viewBox="0 0 46 42">
          <path d="M12 2 H34 L44 21 L34 40 H12 L2 21Z" fill="none" stroke="#888" strokeWidth="2.6" strokeLinejoin="round" />
          <circle cx="23" cy="21" r="7" fill="none" stroke="#888" strokeWidth="2.6" />
        </svg>
      </Tab>
    </Tabs>

    <IndicatorBar $height={58} $ruled>
      <Chip $width={207}>
        主力操盘线JX
        <ChipCaret />
      </Chip>
      <Legend $size={26} $color="#5a6a7a" $gap={128}>
        SWL: 2.68
        <TrendMark color="#0c9c40" />
      </Legend>
      <Legend $color={NEON} $weight={500}>
        <TrendMark color="#0c9c40" gap={7} />
        生命线: 2.68
        <TrendMark up color="#e0141c" />
      </Legend>
    </IndicatorBar>
    <RoundButton $top={579}>筹</RoundButton>
    <CandleChart />

    <IndicatorBar $height={56}>
      <Chip $width={204}>
        主力资金追踪
        <ChipCaret />
      </Chip>
      <Legend $color="#e0101c" $gap={9} $weight={500}>
        多头: 44.23
        <TrendMark color="#0c9c40" />
      </Legend>
      <Legend $color={NEON} $weight={500}>
        空头: 45.16
        <TrendMark color="#0c9c40" />
      </Legend>
    </IndicatorBar>
    <RoundButton $top={1296}>
      <svg width="26" height="26" viewBox="0 0 26 26">
        <path d="M9 10 L2 2 M2 9 V2 H9 M17 16 L24 24 M17 24 H24 V17" fill="none" stroke="#888" strokeWidth="2" />
      </svg>
    </RoundButton>
    <FlowChart />

    <IndicatorBar $height={54}>
      <Chip $width={204}>
        主力筹码异动
        <ChipCaret />
      </Chip>
      <Legend $size={27} $color={NEON} $gap={10}>
        散户筹码集中度: 38.80
        <TrendMark up color="#e0141c" />
      </Legend>
      <Legend $size={27} $color="#d0101c" $gap={10}>
        机构筹码集中度: 14.34
        <TrendMark color="#0c9c40" />
      </Legend>
      <Legend $size={27} $color="#10e8e8" $gap={8}>
        主力筹码: 1.34
        <TrendMark color="#0c9c40" />
      </Legend>
      <Legend $size={27} $color="#fff020">
        <TrendMark up color="#fff020" />
        主力成本
      </Legend>
    </IndicatorBar>
    <ChipChart />

    <ArrowLayer viewBox="0 0 1080 1923">
      <HandArrow from="370 1007" tip="455 1152" wings={['451 1099', '411 1122']} />
      <HandArrow from="662 1078" tip="716 1129" wings={['697 1080', '664 1111']} />
      <HandArrow from="938 1051" tip="1015 1167" wings={['1007 1114', '969 1138']} />
      <HandArrow from="403 1493" tip="468 1553" wings={['448 1502', '420 1538']} />
      <HandArrow from="682 1582" tip="775 1628" wings={['740 1584', '716 1624']} />
      <HandArrow from="1016 1563" tip="1069 1654" wings={['1062 1598', '1026 1620']} />
    </ArrowLayer>
  </Page>
);

export default App;
